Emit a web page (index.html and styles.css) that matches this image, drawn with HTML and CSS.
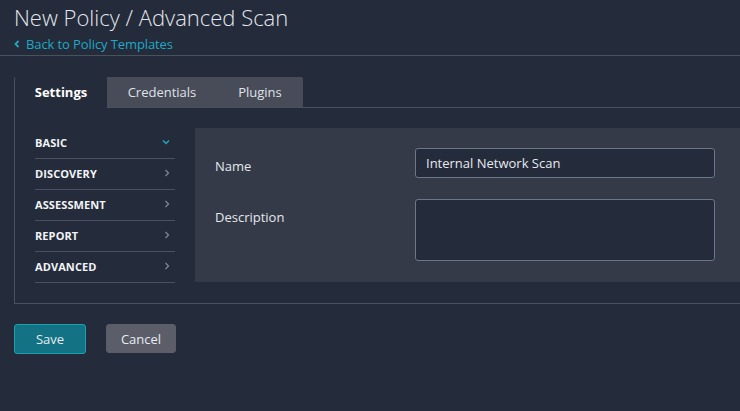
FILE: index.html
```html
<!DOCTYPE html>
<html>
<head>
<meta charset="utf-8">
<link rel="stylesheet" href="styles.css">
</head>
<body>
<header class="page-header">
  <h1 class="title">New Policy / Advanced Scan</h1>
  <a class="back-link" href="#"><svg class="back-icon" width="6" height="8" viewBox="0 0 6 8"><path d="M4.5 1 L1.5 4 L4.5 7" fill="none" stroke="currentColor" stroke-width="1.8"/></svg>Back to Policy Templates</a>
</header>
<main class="content">
  <div class="tabs">
    <div class="tab active">Settings</div>
    <div class="tab">Credentials</div>
    <div class="tab">Plugins</div>
  </div>
  <section class="panel">
    <nav class="side-nav">
      <div class="nav-item open">BASIC<svg class="chev" width="8" height="6" viewBox="0 0 8 6"><path d="M1 1.5 L4 4.5 L7 1.5" fill="none" stroke="currentColor" stroke-width="1.5"/></svg></div>
      <div class="nav-item">DISCOVERY<svg class="chev" width="6" height="8" viewBox="0 0 6 8"><path d="M1.5 1 L4.5 4 L1.5 7" fill="none" stroke="currentColor" stroke-width="1.3"/></svg></div>
      <div class="nav-item">ASSESSMENT<svg class="chev" width="6" height="8" viewBox="0 0 6 8"><path d="M1.5 1 L4.5 4 L1.5 7" fill="none" stroke="currentColor" stroke-width="1.3"/></svg></div>
      <div class="nav-item">REPORT<svg class="chev" width="6" height="8" viewBox="0 0 6 8"><path d="M1.5 1 L4.5 4 L1.5 7" fill="none" stroke="currentColor" stroke-width="1.3"/></svg></div>
      <div class="nav-item">ADVANCED<svg class="chev" width="6" height="8" viewBox="0 0 6 8"><path d="M1.5 1 L4.5 4 L1.5 7" fill="none" stroke="currentColor" stroke-width="1.3"/></svg></div>
    </nav>
    <div class="form-area">
      <div class="form-row">
        <label class="form-label">Name</label>
        <div class="field input">Internal Network Scan</div>
      </div>
      <div class="form-row">
        <label class="form-label">Description</label>
        <div class="field textarea"></div>
      </div>
    </div>
  </section>
  <div class="actions">
    <button class="btn btn-save">Save</button>
    <button class="btn btn-cancel">Cancel</button>
  </div>
</main>
</body>
</html>
```
FILE: styles.css
```css
* { box-sizing: border-box; }
html, body { margin: 0; padding: 0; }
body {
  background: #242b3a;
  font-family: "Open Sans", "DejaVu Sans", sans-serif;
  color: #e6e9ee;
  width: 740px;
  height: 411px;
  overflow: hidden;
}
.page-header {
  padding: 0 0 0 14px;
  height: 56px;
  border-bottom: 1px solid #495060;
}
.title {
  margin: 0;
  font-size: 22px;
  font-weight: 300;
  line-height: 30px;
  padding-top: 2px;
  color: #e3e7ee;
}
.back-link {
  display: flex;
  align-items: center;
  gap: 6px;
  color: #1ea9c6;
  font-size: 13px;
  text-decoration: none;
  line-height: 18px;
  margin-top: 3px;
  letter-spacing: -0.1px;
}
.back-icon { display: block; }
.content { padding: 21px 0 0 14px; }
.tabs {
  display: flex;
  height: 31px;
  border-bottom: 1px solid #495060;
}
.tab {
  background: #484c58;
  color: #dfe2e8;
  font-size: 13px;
  line-height: 30px;
  text-align: center;
}
.tab:nth-child(1) { width: 93px; }
.tab:nth-child(2) { width: 110px; }
.tab:nth-child(3) { width: 86px; border-top-right-radius: 2px; }
.tab.active {
  background: #242b3a;
  font-weight: 700;
  color: #ffffff;
  border-left: 1px solid #495060;
  border-top-left-radius: 2px;
  height: 31px;
  margin-bottom: -1px;
}
.panel {
  display: flex;
  border-left: 1px solid #495060;
  border-bottom: 1px solid #495060;
  padding: 20px 0 20px 20px;
  height: 196px;
}
.side-nav { width: 140px; }
.nav-item {
  display: flex;
  align-items: center;
  justify-content: space-between;
  height: 31px;
  border-bottom: 1px solid #4a5060;
  font-size: 11px;
  font-weight: 700;
  color: #f2f4f7;
  letter-spacing: 0.1px;
  padding-right: 5px;
  padding-bottom: 2px;
}
.nav-item .chev { color: #7d8696; }
.nav-item.open .chev { color: #1fa5bd; }
.form-area {
  flex: 1;
  margin-left: 20px;
  background: #343a47;
  height: 154px;
  padding: 20px 25px 0 20px;
}
.form-row { display: flex; }
.form-row + .form-row { margin-top: 21px; }
.form-label {
  width: 200px;
  font-size: 13px;
  color: #e4e7ec;
  padding-top: 9px;
}
.field {
  flex: 1;
  background: #242b3a;
  border: 1px solid #6c7689;
  border-radius: 3px;
  font-size: 13px;
  color: #e6e9ee;
  padding: 0 10px;
}
.input { height: 30px; line-height: 28px; }
.textarea { height: 62px; }
.actions {
  display: flex;
  gap: 20px;
  margin-top: 20px;
}
.btn {
  font-family: "Open Sans", "DejaVu Sans", sans-serif;
  font-size: 13px;
  border-radius: 3px;
  color: #e8ecf0;
  cursor: pointer;
}
.btn-save {
  width: 72px;
  height: 30px;
  background: #137284;
  border: 1px solid #1aa0b3;
}
.btn-cancel {
  width: 70px;
  height: 29px;
  background: #5b5e68;
  border: 1px solid #5b5e68;
}
```
